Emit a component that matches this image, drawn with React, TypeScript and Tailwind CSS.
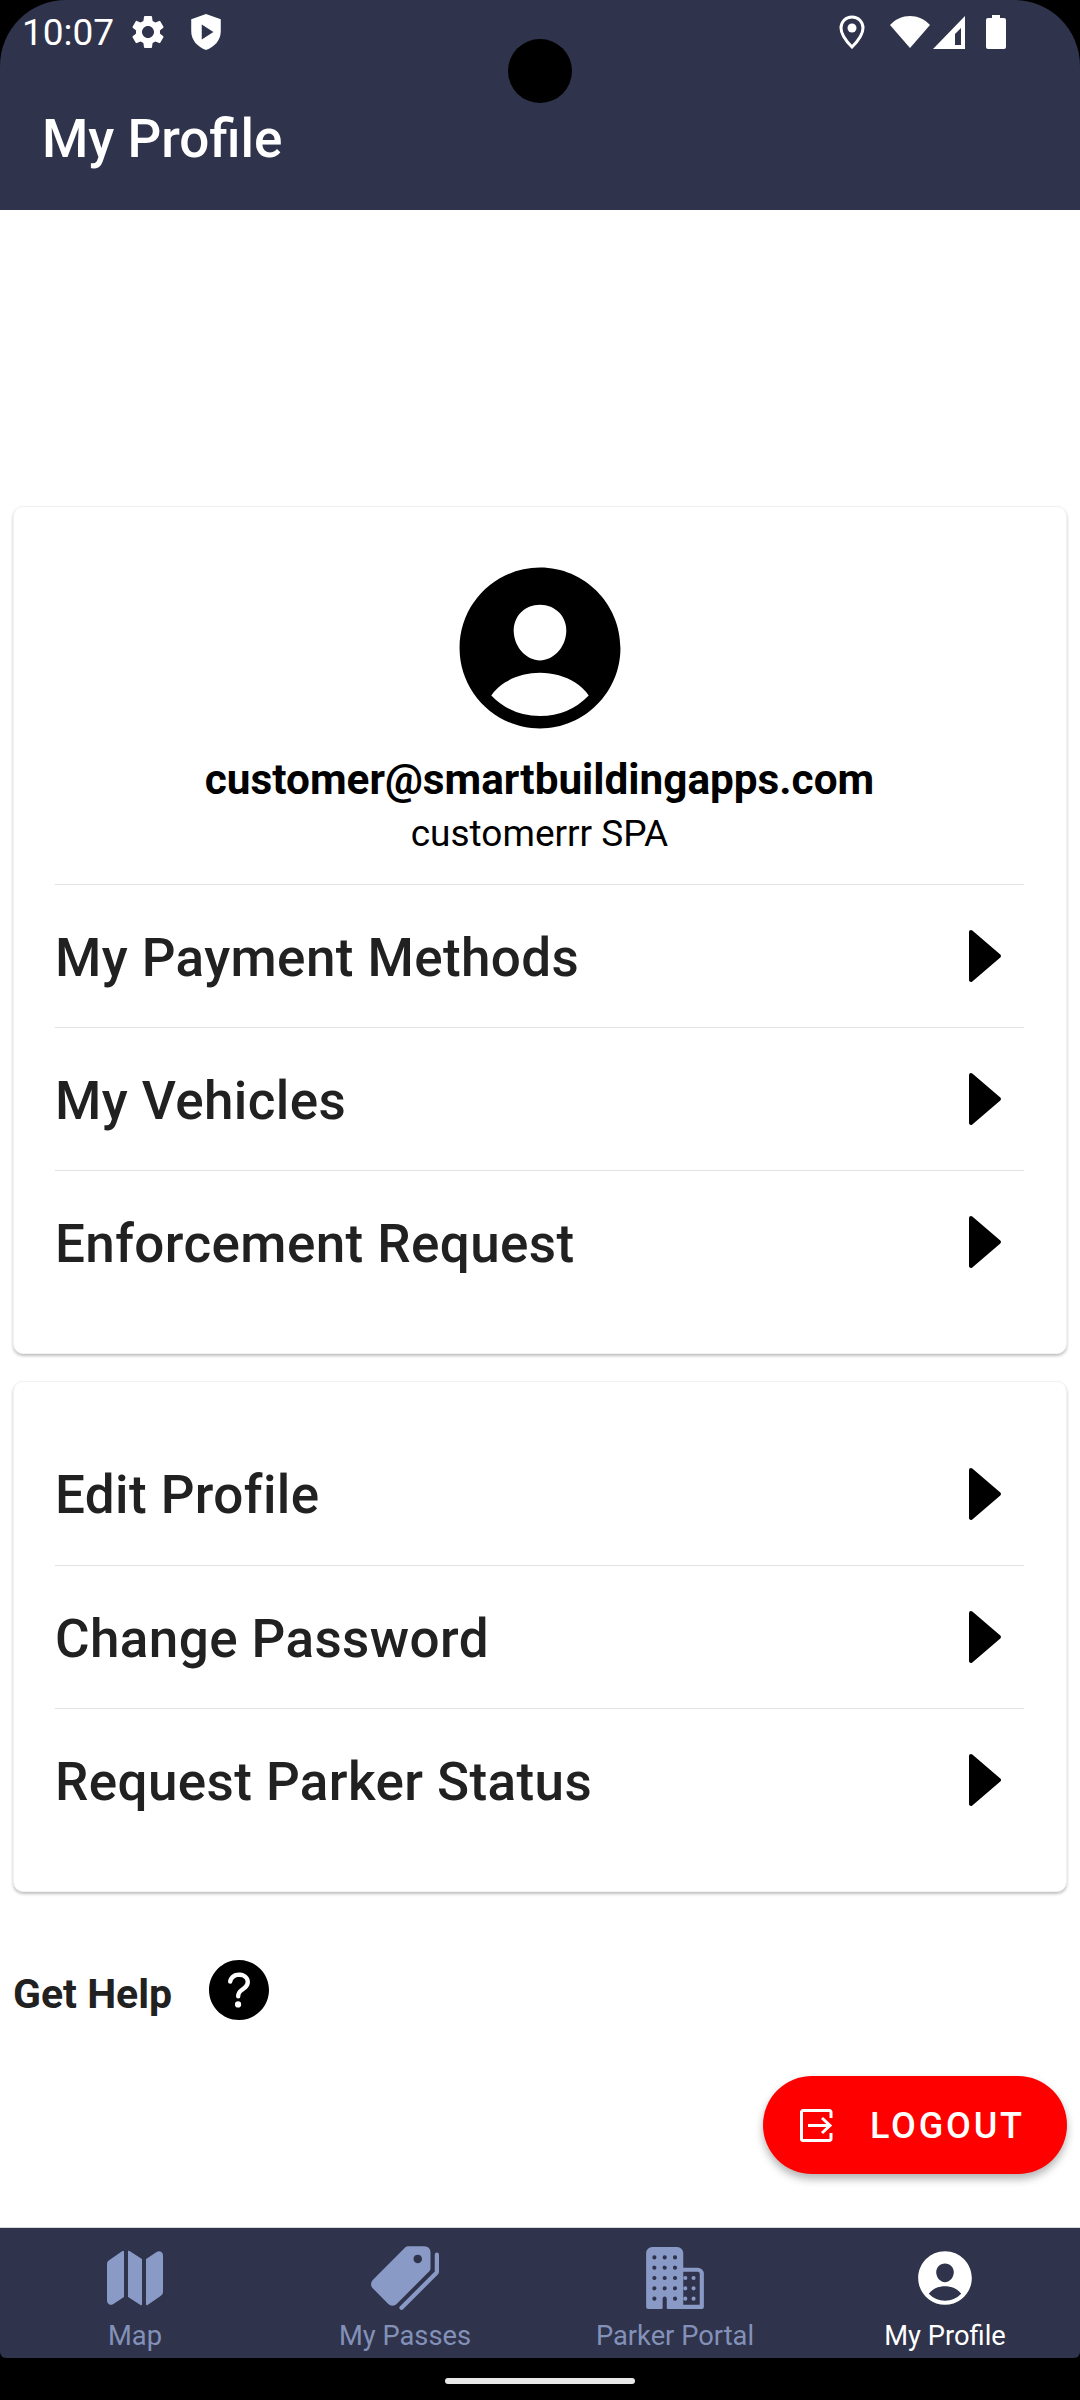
import React from "react";
import { IoMap, IoPricetags, IoBusiness, IoPersonCircle, IoHelpCircle } from "react-icons/io5";
import { MdSettings } from "react-icons/md";

const Arrow = () => (
  <svg width="34" height="54" viewBox="0 0 34 54" className="shrink-0">
    <path d="M3 3 L31 27 L3 51 Z" fill="#000" stroke="#000" strokeWidth="4" strokeLinejoin="round" />
  </svg>
);

const Row = ({ label, border }: { label: string; border?: boolean }) => (
  <div className={`h-[143px] flex items-center justify-between pr-[22px] ${border ? "border-t border-[#e3e3e3]" : ""}`}>
    <span className="pt-[5px] text-[53px] font-medium text-[#212121] tracking-[0.4px]">{label}</span>
    <Arrow />
  </div>
);

const Tab = ({ icon, label, active }: { icon: React.ReactNode; label: string; active?: boolean }) => (
  <div className="flex-1 flex flex-col items-center">
    <div className={`h-[72px] flex items-center justify-center ${active ? "text-white" : "text-[#8a9ac6]"}`}>{icon}</div>
    <span className={`text-[27.3px] leading-[40px] mt-[2px] ${active ? "text-white" : "text-[#8391b9]"}`}>{label}</span>
  </div>
);

export default function App() {
  return (
    <div className="w-[1080px] h-[2400px] bg-black flex flex-col overflow-hidden relative" style={{ fontFamily: "Roboto, sans-serif" }}>
      <div className="h-[210px] bg-[#2f334b] rounded-t-[66px] flex flex-col shrink-0">
        <div className="h-[64px] flex items-center justify-between pl-[22px] pr-[74px]">
          <div className="flex items-center text-white">
            <span className="text-[37px] leading-none">10:07</span>
            <MdSettings size={40} className="ml-[14px]" />
            <svg width="36" height="38" viewBox="0 0 30 36" className="ml-[20px]">
              <path d="M15 1 L29 6 V17 C29 26 23 32 15 35 C7 32 1 26 1 17 V6 Z" fill="#fff" />
              <path d="M11 11 L22 18 L11 25 Z" fill="#2f334b" />
            </svg>
          </div>
          <div className="flex items-center">
            <svg width="26" height="34" viewBox="0 0 26 34">
              <path d="M13 2 C6.5 2 2 7 2 13 C2 20 9 28 13 32 C17 28 24 20 24 13 C24 7 19.5 2 13 2 Z" fill="none" stroke="#fff" strokeWidth="3" />
              <circle cx="13" cy="13" r="4.5" fill="#fff" />
            </svg>
            <svg width="40" height="32" viewBox="0 0 40 32" className="ml-[25px]">
              <path d="M0 9 C11 -3 29 -3 40 9 L20 32 Z" fill="#fff" />
            </svg>
            <svg width="33" height="33" viewBox="0 0 33 33" className="ml-[3px]">
              <path d="M32 0 V33 H0 Z" fill="#fff" />
              <path d="M22 18 L28 12 V29 H22 Z" fill="#2f334b" />
            </svg>
            <svg width="20" height="34" viewBox="0 0 20 34" className="ml-[20px]">
              <path d="M6 0 H14 V3 H18 A2 2 0 0 1 20 5 V32 A2 2 0 0 1 18 34 H2 A2 2 0 0 1 0 32 V5 A2 2 0 0 1 2 3 H6 Z" fill="#fff" />
            </svg>
          </div>
        </div>
        <div className="pl-[42px] mt-[45px] text-[53px] leading-[60px] font-medium text-white">My Profile</div>
      </div>
      <div className="absolute left-[508px] top-[39px] w-[64px] h-[64px] rounded-full bg-black" />

      <div className="flex-1 bg-white flex flex-col px-[13px] pt-[296px] min-h-0">
        <div className="bg-white rounded-[10px] border border-[#f2f2f2] shadow-[0_2px_3px_rgba(0,0,0,0.25)] pl-[41px] pr-[42px] h-[848px]">
          <div className="flex flex-col items-center pt-[61px]">
            <IoPersonCircle size={198} className="text-black -my-[19px]" />
            <div className="mt-[27px] text-[42.3px] leading-[50px] font-bold text-black">customer@smartbuildingapps.com</div>
            <div className="mt-[4px] text-[37px] leading-[50px] text-black">customerrr SPA</div>
          </div>
          <div className="mt-[25px]">
            <Row label="My Payment Methods" border />
            <Row label="My Vehicles" border />
            <Row label="Enforcement Request" border />
          </div>
        </div>
        <div className="mt-[27px] bg-white rounded-[10px] border border-[#f2f2f2] shadow-[0_2px_3px_rgba(0,0,0,0.25)] pl-[41px] pr-[42px] pt-[40px] h-[511px]">
          <Row label="Edit Profile" />
          <Row label="Change Password" border />
          <Row label="Request Parker Status" border />
        </div>
        <div className="mt-[68px] flex items-center h-[70px]">
          <span className="text-[41px] font-bold text-[#212121]">Get Help</span>
          <IoHelpCircle size={80} className="text-black ml-[27px] -mt-[10px]" />
        </div>
        <div className="flex justify-end mt-[46px]">
          <div className="w-[304px] h-[98px] rounded-full bg-[#ff0000] shadow-[0_5px_8px_rgba(0,0,0,0.3)] flex items-center pl-[37px]">
            <svg width="33" height="33" viewBox="0 0 33 33" fill="none" stroke="#fff" strokeWidth="3">
              <path d="M31 9 V3 A1.5 1.5 0 0 0 29.5 1.5 H3 A1.5 1.5 0 0 0 1.5 3 V30 A1.5 1.5 0 0 0 3 31.5 H29.5 A1.5 1.5 0 0 0 31 30 V24" />
              <path d="M8 16.5 H30 M22 9 L30 16.5 L22 24" />
            </svg>
            <span className="ml-[37px] pt-[1px] text-[36px] font-medium text-white tracking-[2.8px]">LOGOUT</span>
          </div>
        </div>
      </div>

      <div className="h-[131px] bg-[#2f334b] border-t border-[#d8d8d8] rounded-b-[6px] flex pt-[14px] shrink-0">
        <Tab icon={<IoMap size={64} />} label="Map" />
        <Tab icon={<IoPricetags size={68} />} label="My Passes" />
        <Tab icon={<IoBusiness size={66} />} label="Parker Portal" />
        <Tab icon={<IoPersonCircle size={66} />} label="My Profile" active />
      </div>
      <div className="h-[42px] pt-[4px] flex items-center justify-center shrink-0">
        <div className="w-[190px] h-[6px] rounded-full bg-[#e8e8e8]" />
      </div>
    </div>
  );
}
